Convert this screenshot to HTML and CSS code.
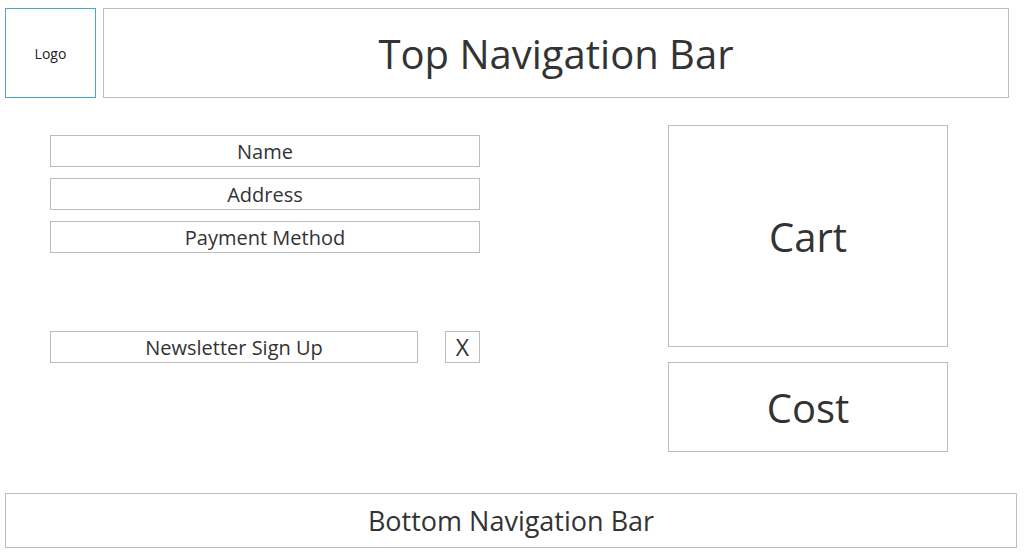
FILE: index.html
```html
<!DOCTYPE html>
<html lang="en">
<head>
<meta charset="utf-8">
<title>Checkout Wireframe</title>
<link rel="stylesheet" href="styles.css">
</head>
<body>
<header class="header">
  <div class="box logo">Logo</div>
  <div class="box topnav">Top Navigation Bar</div>
</header>
<main class="main">
  <section class="form">
    <div class="box field">Name</div>
    <div class="box field">Address</div>
    <div class="box field">Payment Method</div>
    <div class="newsletter-row">
      <div class="box field newsletter">Newsletter Sign Up</div>
      <div class="box close">X</div>
    </div>
  </section>
  <aside class="side">
    <div class="box cart">Cart</div>
    <div class="box cost">Cost</div>
  </aside>
</main>
<footer class="box bottomnav">Bottom Navigation Bar</footer>
</body>
</html>
```
FILE: styles.css
```css
* { box-sizing: border-box; }
html, body { background: #fff; }
body {
  margin: 0;
  font-family: "Open Sans", "Noto Sans", sans-serif;
  color: #333;
}
.box {
  border: 1px solid #bdbdbd;
  display: flex;
  align-items: center;
  justify-content: center;
  background: #fff;
}
.header {
  display: flex;
  gap: 7px;
  padding: 8px 17px 0 5px;
}
.logo {
  width: 91px;
  height: 90px;
  border-color: #4ba7c6;
  font-size: 14px;
  color: #222;
}
.topnav {
  flex: 1;
  height: 90px;
  font-size: 40px;
}
.main {
  display: flex;
  gap: 188px;
  padding-left: 50px;
  margin-top: 27px;
}
.form {
  width: 430px;
  padding-top: 10px;
  display: flex;
  flex-direction: column;
  gap: 11px;
}
.field {
  height: 32px;
  font-size: 20px;
}
.newsletter-row {
  display: flex;
  justify-content: space-between;
  margin-top: 67px;
}
.newsletter {
  width: 368px;
}
.close {
  width: 35px;
  height: 32px;
  font-size: 23px;
}
.side {
  width: 280px;
  display: flex;
  flex-direction: column;
  gap: 15px;
}
.cart {
  height: 222px;
  font-size: 40px;
}
.cost {
  height: 90px;
  font-size: 40px;
}
.bottomnav {
  margin: 41px 0 0 5px;
  width: 1012px;
  height: 55px;
  font-size: 27px;
}
```
